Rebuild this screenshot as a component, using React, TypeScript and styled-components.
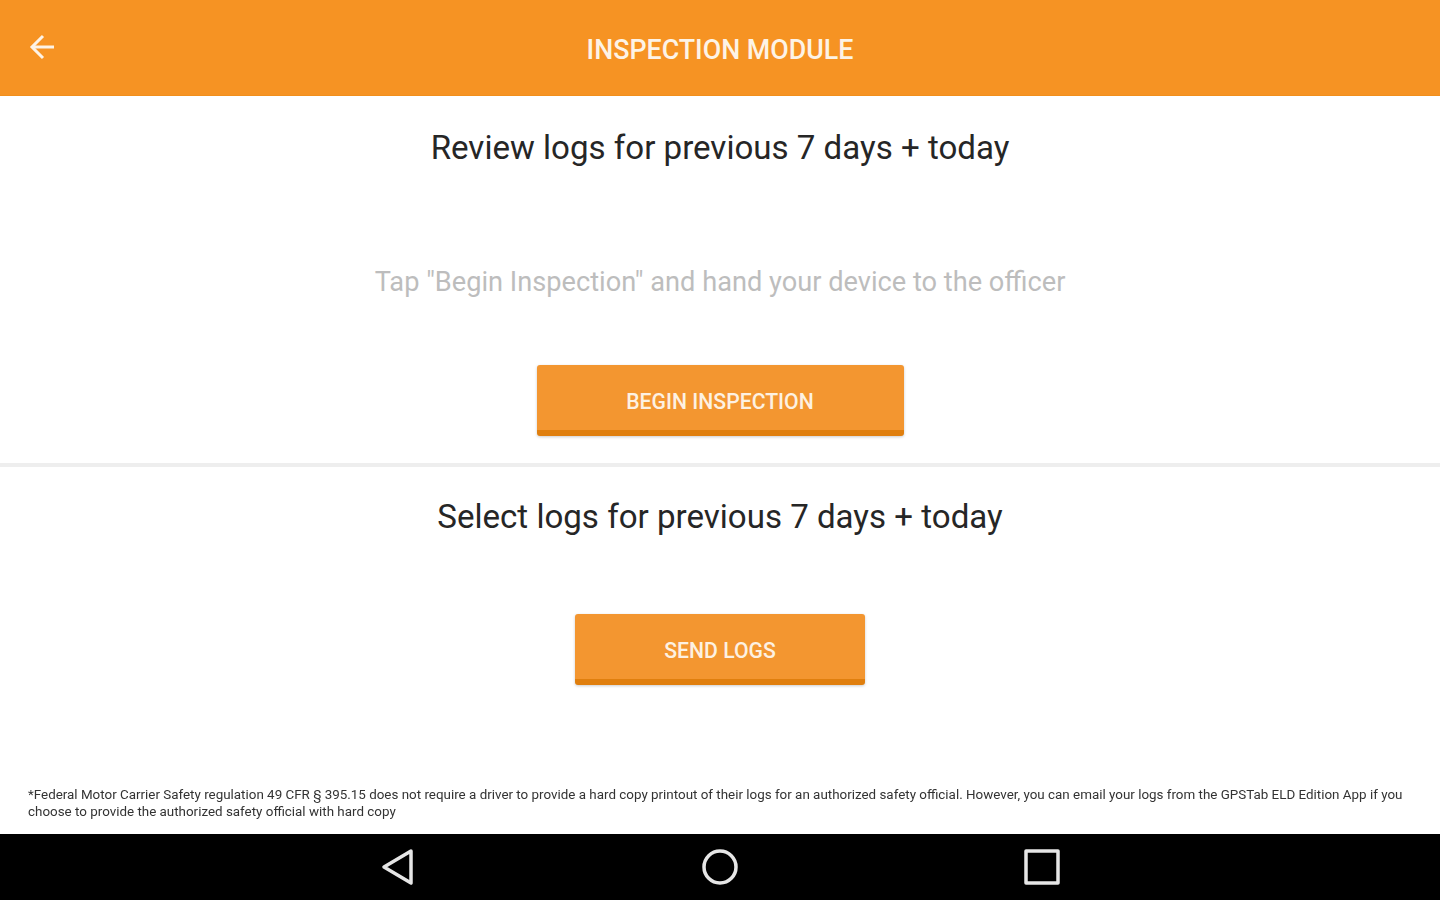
import React from "react";
import styled, { createGlobalStyle } from "styled-components";

const GlobalStyle = createGlobalStyle`
  html, body {
    margin: 0;
    padding: 0;
    background: #fff;
    font-family: Roboto, "Liberation Sans", sans-serif;
  }
`;

const Screen = styled.div`
  width: 1440px;
  height: 900px;
  display: flex;
  flex-direction: column;
  overflow: hidden;
  background: #fff;
`;

const Toolbar = styled.header`
  height: 96px;
  flex-shrink: 0;
  box-sizing: border-box;
  border-bottom: 1px solid #f18f1c;
  display: grid;
  grid-template-columns: 84px 1fr 84px;
  align-items: center;
  background: #f69323;
  color: #fff;
`;

const BackButton = styled.div`
  display: flex;
  justify-content: center;
  margin-bottom: 1px;
`;

const ToolbarTitle = styled.h1`
  margin: 4px 0 0;
  text-align: center;
  font-size: 26.8px;
  font-weight: 500;
  line-height: 32px;
  color: #fdf3e6;
`;

const Section = styled.section`
  display: flex;
  flex-direction: column;
  align-items: center;
  flex-shrink: 0;
`;

const ReviewSection = styled(Section)`
  height: 367px;
  padding-top: 31px;
  box-sizing: border-box;
`;

const SelectSection = styled(Section)`
  flex-grow: 1;
  padding-top: 29px;
`;

const Heading = styled.h2`
  margin: 0;
  font-size: 33.1px;
  font-weight: 400;
  line-height: 42px;
  color: #262626;
`;

const Hint = styled.p`
  margin: 95px 0 0;
  font-size: 27.2px;
  line-height: 36px;
  color: #bdbdbd;
`;

const ActionButton = styled.button<{ $width: number; $top: number }>`
  width: ${(p) => p.$width}px;
  height: 71px;
  margin-top: ${(p) => p.$top}px;
  padding: 8px 0 0;
  border: none;
  border-bottom: 6px solid #e07f0e;
  border-radius: 3px;
  background: #f39630;
  box-shadow: 0 1px 3px rgba(0, 0, 0, 0.2);
  color: #fdf1e2;
  font-family: Roboto, "Liberation Sans", sans-serif;
  font-size: 21.2px;
  font-weight: 500;
`;

const Divider = styled.hr`
  width: 100%;
  height: 4px;
  margin: 0;
  border: none;
  flex-shrink: 0;
  background: #eeeeee;
`;

const Disclaimer = styled.p`
  margin: 0;
  padding: 0 28px 14px;
  flex-shrink: 0;
  font-size: 13.4px;
  line-height: 17px;
  color: #333;
  filter: blur(0.4px);
`;

const NavBar = styled.nav`
  height: 66px;
  flex-shrink: 0;
  display: flex;
  justify-content: center;
  align-items: center;
  gap: 250px;
  background: #000;
`;

const NavSlot = styled.div`
  width: 72px;
  height: 66px;
  display: flex;
  align-items: center;
  justify-content: center;
`;

export default function App() {
  return (
    <Screen>
      <GlobalStyle />
      <Toolbar>
        <BackButton>
          <svg width="28" height="28" viewBox="0 0 28 28" fill="none" stroke="#fdf3e6" strokeWidth="3">
            <path d="M26 14H5" />
            <path d="M15 3L4 14l11 11" />
          </svg>
        </BackButton>
        <ToolbarTitle>INSPECTION MODULE</ToolbarTitle>
      </Toolbar>
      <ReviewSection>
        <Heading>Review logs for previous 7 days + today</Heading>
        <Hint>Tap "Begin Inspection" and hand your device to the officer</Hint>
        <ActionButton $width={367} $top={65}>BEGIN INSPECTION</ActionButton>
      </ReviewSection>
      <Divider />
      <SelectSection>
        <Heading>Select logs for previous 7 days + today</Heading>
        <ActionButton $width={290} $top={76}>SEND LOGS</ActionButton>
      </SelectSection>
      <Disclaimer>
        *Federal Motor Carrier Safety regulation 49 CFR § 395.15 does not require a driver to provide a hard copy printout of their logs for an authorized safety official. However, you can email your logs from the GPSTab ELD Edition App if you choose to provide the authorized safety official with hard copy
      </Disclaimer>
      <NavBar>
        <NavSlot>
          <svg width="36" height="38" viewBox="0 0 36 38" fill="none" stroke="#e6e6e6" strokeWidth="3.5" strokeLinejoin="round">
            <path d="M31 3L4 19l27 16z" />
          </svg>
        </NavSlot>
        <NavSlot>
          <svg width="38" height="38" viewBox="0 0 38 38" fill="none" stroke="#e6e6e6" strokeWidth="3.5">
            <circle cx="19" cy="19" r="16" />
          </svg>
        </NavSlot>
        <NavSlot>
          <svg width="38" height="38" viewBox="0 0 38 38" fill="none" stroke="#e6e6e6" strokeWidth="3.5" strokeLinejoin="round">
            <rect x="3" y="3" width="32" height="32" />
          </svg>
        </NavSlot>
      </NavBar>
    </Screen>
  );
}
